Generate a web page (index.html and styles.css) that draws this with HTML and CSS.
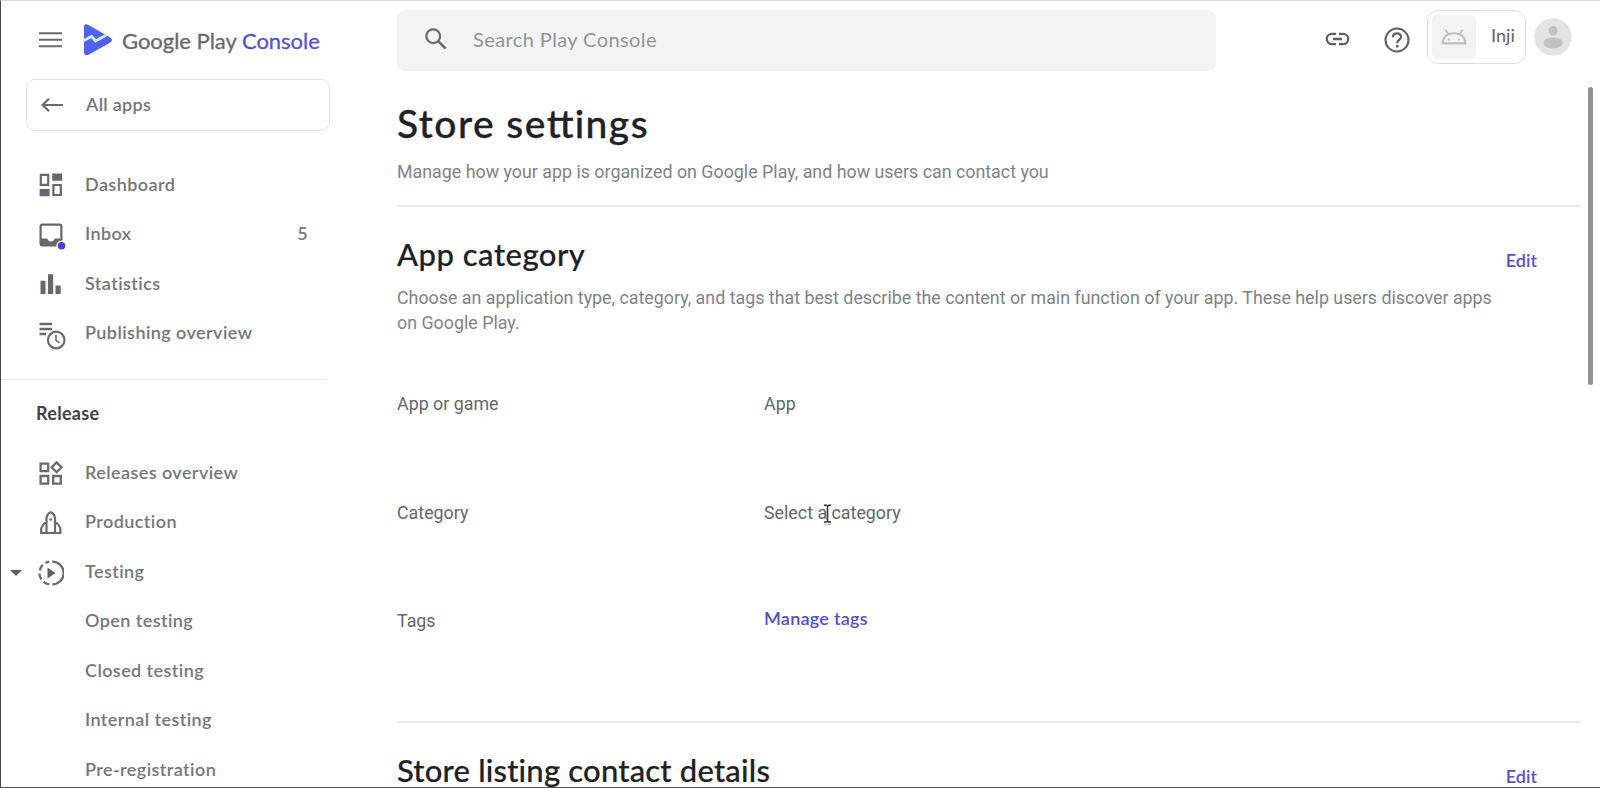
FILE: index.html
```html
<!DOCTYPE html>
<html lang="en">
<head>
<meta charset="utf-8">
<title>Store settings</title>
<link rel="stylesheet" href="styles.css">
</head>
<body>
<div class="app">
  <aside class="sidebar">
    <div class="brand">
      <svg class="menu" width="23" height="16" viewBox="0 0 23 16"><path d="M0 1.300h23M0 7.800h23M0 14.200h23" stroke="#696b6e" stroke-width="2"/></svg>
      <svg class="logo" width="28" height="32" viewBox="0 0 28 32">
        <path d="M0 2.500Q0 .2 2 .2q1 0 2 .5l21.500 12.300q2.500 1.500 2.500 3 0 1.600-2.500 3L4.500 30.800Q3 31.600 1.600 31 0 30.500 0 28.500z" fill="#5260f0"/>
        <path d="M0 16.500 7.500 12.300 11.500 17 22.500 11" fill="none" stroke="#d3f3fb" stroke-width="2.800"/>
      </svg>
      <span class="brand-name">Google Play <span class="brand-accent">Console</span></span>
    </div>
    <a class="all-apps">
      <svg width="22" height="14" viewBox="0 0 22 14"><path d="M22 7H1.500M8 .8 1.500 7 8 13.200" fill="none" stroke="#696b6e" stroke-width="2.200"/></svg>
      <span>All apps</span>
    </a>
    <nav class="nav">
      <a class="item"><span class="icon"><svg width="24" height="24" viewBox="0 0 24 24"><path d="M1.800 1.800h7.400v10H1.800zM14.400 12h7.400v10h-7.400z" fill="none" stroke="#66686f" stroke-width="2.200"/><path d="M13.200.6h10v7.200h-10zM.6 16h10v7.200H.6z" fill="#66686f"/></svg></span><span>Dashboard</span></a>
      <a class="item"><span class="icon"><svg width="28" height="28" viewBox="0 0 28 28"><rect x="1.600" y="1.600" width="20.800" height="20.800" rx="2" fill="none" stroke="#66686b" stroke-width="2.200"/><path d="M1.500 15.500h6.500q1.400 3 4 3t4-3h6.500V23h-21z" fill="#66686b"/><circle cx="22.500" cy="22.800" r="5.200" fill="#fff"/><circle cx="22.500" cy="22.800" r="3.800" fill="#4a45c8"/></svg></span><span>Inbox</span><span class="count">5</span></a>
      <a class="item"><span class="icon"><svg width="24" height="24" viewBox="0 0 24 24"><path d="M1.500 8.700h5V22h-5zM9 2.200h5.200V22H9zM16.500 13.500h5.200V22h-5.200z" fill="#66686f"/></svg></span><span>Statistics</span></a>
      <a class="item"><span class="icon"><svg width="28" height="28" viewBox="0 0 28 28"><path d="M.5 2h12.500M.5 7h12.500M.5 12h6.500" stroke="#696b6e" stroke-width="2.400"/><circle cx="17.200" cy="18" r="8.300" fill="#fff" stroke="#696b6e" stroke-width="2.200"/><path d="M17 13v5.400l3.600 2.500" fill="none" stroke="#696b6e" stroke-width="1.600"/></svg></span><span>Publishing overview</span></a>
    </nav>
    <h3 class="group">Release</h3>
    <nav class="nav">
      <a class="item"><span class="icon"><svg width="25" height="24" viewBox="0 0 25 24"><path d="M1.600 2.600h7.600v7.600H1.600zM1.600 15h7.600v7.600H1.600zM14.200 15h7.600v7.600h-7.600zM17.600 1.400l4.900 4.900-4.900 4.900-4.900-4.900z" fill="none" stroke="#696b6e" stroke-width="2.300"/></svg></span><span>Releases overview</span></a>
      <a class="item"><span class="icon"><svg width="24" height="24" viewBox="0 0 24 24"><path d="M7.500 22V7q.6-4.500 4.200-5.800Q15.400 2.500 16 7v15zM7.500 10.500Q2.200 15 2.200 18.500V22h19.200v-3.500Q21.400 15 16 10.500" fill="none" stroke="#696b6e" stroke-width="2.200"/><circle cx="11.800" cy="8.500" r="1.300" fill="#696b6e"/></svg></span><span>Production</span></a>
      <a class="item"><svg class="caret" width="12" height="6" viewBox="0 0 12 6"><path d="M0 0h12L6 6z" fill="#5f6165"/></svg><span class="icon wide"><svg width="26" height="26" viewBox="0 0 26 26"><path d="M14.300 1.600A11.400 11.400 0 0 1 14.300 24.400" fill="none" stroke="#696b6e" stroke-width="2.300"/><path d="M11.300 24.300A11.400 11.400 0 0 1 11.300 1.700" fill="none" stroke="#696b6e" stroke-width="2.300" stroke-dasharray="6.300 3.200"/><path d="M9.500 7.600v10.800l8-5.400z" fill="#5f6165"/></svg></span><span>Testing</span></a>
      <a class="item sub">Open testing</a>
      <a class="item sub">Closed testing</a>
      <a class="item sub">Internal testing</a>
      <a class="item sub">Pre-registration</a>
    </nav>
  </aside>

  <div class="page">
    <header class="topbar">
      <div class="search">
        <svg width="22" height="22" viewBox="0 0 22 22"><circle cx="8.200" cy="8.200" r="6.900" fill="none" stroke="#696b6e" stroke-width="2.200"/><path d="m13.200 13.200 7.500 7.500" stroke="#696b6e" stroke-width="2.600"/></svg>
        <span>Search Play Console</span>
      </div>
      <svg class="link" width="25" height="14" viewBox="0 0 25 14"><path d="M11 1.800H7a5.200 5.200 0 0 0 0 10.400h4M14 1.800h4a5.200 5.200 0 0 1 0 10.400h-4M8 7h9" fill="none" stroke="#606265" stroke-width="2.300"/></svg>
      <svg class="help" width="26" height="26" viewBox="0 0 26 26"><circle cx="13" cy="13" r="11.500" fill="none" stroke="#606265" stroke-width="2.100"/><path d="M9 10.300q0-4 4-4t4 3.600c0 2.600-3.800 3-3.800 6.300" fill="none" stroke="#606265" stroke-width="2.200"/><path d="M12 18h2.500v2.500H12z" fill="#606265"/></svg>
      <div class="app-chip">
        <span class="app-thumb"><svg width="26" height="16" viewBox="0 0 26 16"><path d="M1.500 14.200Q2.600 4.200 13 4.200t11.500 10z" fill="none" stroke="#bdbfc1" stroke-width="1.900"/><path d="M4.500.6 7.500 5.500M21.500.6l-3 4.900M1 14.400h24" stroke="#bdbfc1" stroke-width="1.700"/><circle cx="8" cy="10.500" r="1.100" fill="#bdbfc1"/><circle cx="18" cy="10.500" r="1.100" fill="#bdbfc1"/></svg></span>
        <span>Inji</span>
      </div>
      <svg class="avatar" width="38" height="38" viewBox="0 0 38 38"><circle cx="19" cy="19" r="18.700" fill="#e3e3e3"/><circle cx="19" cy="12.700" r="4.700" fill="#c1c1c1"/><ellipse cx="19" cy="25" rx="9.700" ry="5.500" fill="#c1c1c1"/></svg>
    </header>

    <div class="body">
      <main class="content">
        <div class="intro">
          <h1>Store se<span class="lig">tt</span>ings</h1>
          <p>Manage how your app is organized on Google Play, and how users can contact you</p>
        </div>
        <section class="section">
          <div class="section-head"><h2>App category</h2><a class="edit">Edit</a></div>
          <p class="desc">Choose an application type, category, and tags that best describe the content or main function of your app. These help users discover apps on Google Play.</p>
          <dl class="fields">
            <dt>App or game</dt><dd>App</dd>
            <dt>Category</dt><dd class="pick">Select a category
              <svg class="cursor" width="9" height="21" viewBox="0 0 9 21"><path d="M1 1.200h2.200l1.300.8 1.300-.8H8M1 18h2.200l1.300-.8 1.300.8H8M4.500 2v15.500" fill="none" stroke="#333" stroke-width="1.600"/><path d="M.5 20.300h8" stroke="#bbb" stroke-width="1"/></svg></dd>
            <dt>Tags</dt><dd><a class="manage">Manage tags</a></dd>
          </dl>
        </section>
        <section class="section last">
          <div class="section-head second"><h2>Store listing contact details</h2><a class="edit">Edit</a></div>
        </section>
      </main>
      <div class="scrollbar"><div class="thumb"></div></div>
    </div>
  </div>
</div>
</body>
</html>
```
FILE: styles.css
```css
* { box-sizing: border-box; }
body { margin: 0; background: #fff; }
h1, h2, h3, p, dl, dd { margin: 0; font-weight: 400; }
svg { display: block; flex: none; }

.app {
  display: flex;
  width: 1600px;
  height: 788px;
  overflow: hidden;
  border-top: 1px solid #d9dadb;
  border-left: 1px solid #4b444b;
  border-bottom: 1px solid #55565a;
  font-family: Lato, "Liberation Sans", sans-serif;
  color: #74777c;
}

/* Sidebar */
.sidebar { flex: none; width: 396px; }
.brand { display: flex; align-items: center; height: 78px; padding-left: 38px; }
.logo { margin: 0 0 0 22px; }
.brand-name { margin: 0 0 0 10px; font-size: 22px; letter-spacing: -.02px; color: #68696c; white-space: pre; -webkit-text-stroke: .3px; }
.brand-accent { color: #5554d2; }
.all-apps {
  display: flex;
  align-items: center;
  gap: 23px;
  width: 304px;
  height: 52px;
  margin-left: 25px;
  padding-left: 14px;
  border: 1px solid #e2e3e4;
  border-radius: 9px;
  font-size: 18px;
  font-weight: 600;
  letter-spacing: .3px;
}
.all-apps span { padding-bottom: 3px; }
.nav { display: flex; flex-direction: column; font-size: 18px; font-weight: 600; letter-spacing: .42px; }
.nav:first-of-type { width: 326px; height: 249px; padding-top: 29px; border-bottom: 1px solid #e7e8e9; }
.item { display: flex; align-items: center; height: 49.5px; padding: 0 19px 2px 38px; position: relative; }
.icon { flex: none; width: 46px; height: 24px; margin-top: 3px; }
.wide { width: 47px; margin-left: -1px; }
.count { margin-left: auto; }
.caret { position: absolute; left: 9px; top: 23px; }
.sub { padding-left: 84px; }
.group { height: 68px; padding: 21px 0 0 35px; font-size: 18px; line-height: 24px; font-weight: 700; letter-spacing: .3px; color: #404144; }

/* Top bar */
.page { flex: 1; display: flex; flex-direction: column; min-width: 0; }
.topbar { flex: none; display: flex; align-items: flex-start; height: 86px; padding-top: 9px; }
.search {
  display: flex;
  align-items: center;
  gap: 26px;
  width: 819px;
  height: 61px;
  padding: 0 28px 3px;
  border-radius: 8px;
  background: #f2f4f4;
  font-size: 20px;
  letter-spacing: .4px;
  color: #929598;
}
.link { margin: 22px 0 0 109px; }
.help { margin: 17px 0 0 34px; }
.app-chip {
  display: flex;
  align-items: center;
  width: 99px;
  height: 54px;
  margin-left: 17px;
  padding: 0 0 0 4px;
  border: 1px solid #dedfe1;
  border-radius: 11px;
  font-size: 18px;
  font-weight: 500;
  color: #67696e;
}
.app-chip > span:last-child { margin: -4px 0 0 15px; }
.app-thumb { display: flex; align-items: center; justify-content: center; width: 44px; height: 44px; border-radius: 6px; background: #f2f4f4; }
.avatar { margin: 8px 0 0 8px; }

/* Content */
.body { flex: 1; display: flex; min-height: 0; }
.content { flex: none; width: 1183px; overflow: hidden; color: #808388; font: 17.83px/25px Roboto, sans-serif; }
h1, h2, .edit, .manage { font-family: Lato, "Liberation Sans", sans-serif; }
h1, h2 { color: #202124; font-weight: 500; white-space: nowrap; }
.intro { height: 120px; border-bottom: 2px solid #e6e7e8; }
h1 { padding-top: 11px; font-size: 39px; line-height: 50px; letter-spacing: 1.45px; -webkit-text-stroke: .3px; }
.lig { letter-spacing: 0; margin-right: 1px; }
.intro p { padding-top: 11px; }
.section { height: 516px; border-bottom: 2px solid #e6e7e8; }
.last { border-bottom: 0; }
.section-head { display: flex; justify-content: space-between; height: 78px; padding: 26px 43px 0 0; }
h2 { font-size: 31px; line-height: 42px; letter-spacing: .5px; -webkit-text-stroke: .2px; }
.second h2 { letter-spacing: .2px; }
.edit { padding-top: 15px; font-size: 18px; line-height: 24px; font-weight: 600; color: #5752c9; }
.desc { width: 1110px; }
.fields { display: grid; grid-template-columns: 367px 1fr; grid-auto-rows: 108.5px; padding-top: 56px; color: #64676b; }
.pick { position: relative; }
.cursor { position: absolute; left: 59px; top: 4px; }
.manage { font-size: 18px; font-weight: 600; letter-spacing: .25px; color: #5350c9; position: relative; top: -2px; }
.scrollbar { flex: 1; padding-left: 8px; }
.thumb { width: 5px; height: 298px; border-radius: 3px; background: #909294; }
```
